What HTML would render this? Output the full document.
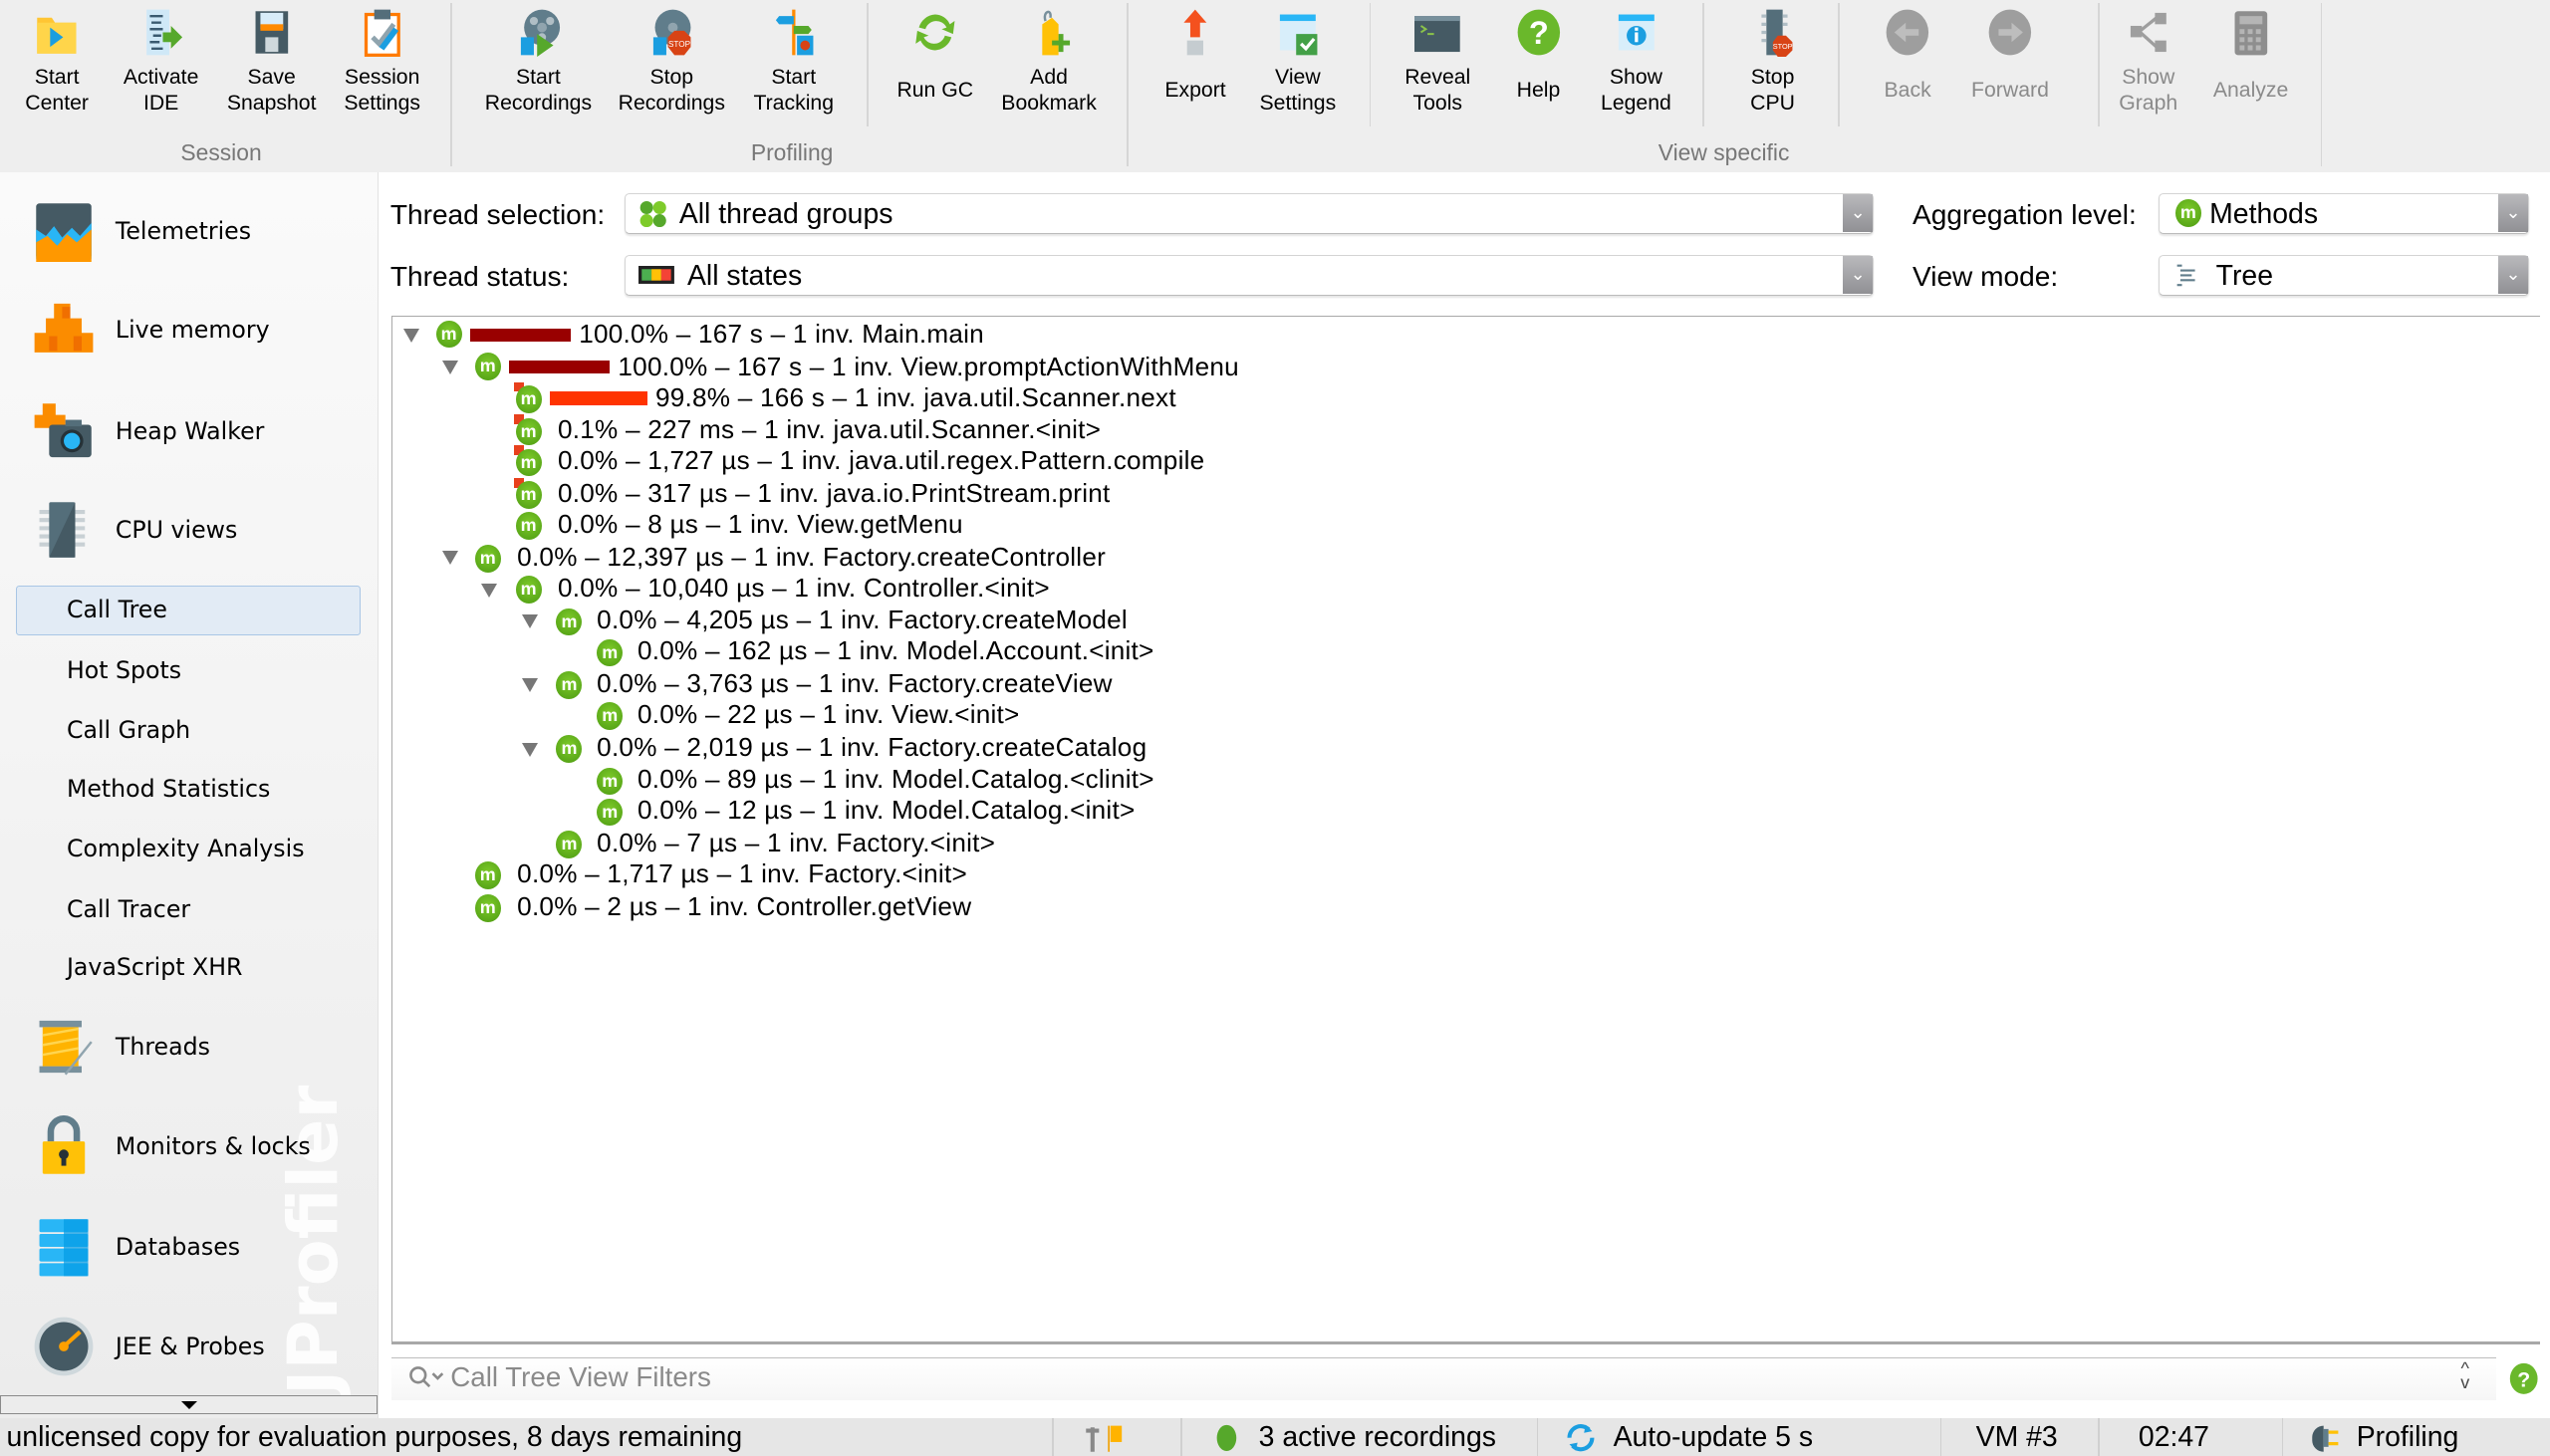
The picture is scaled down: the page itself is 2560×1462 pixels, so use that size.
<!DOCTYPE html>
<html><head><meta charset="utf-8"><style>
*{margin:0;padding:0;box-sizing:border-box}
html,body{width:2560px;height:1462px;overflow:hidden;background:#fff}
#w{zoom:1.63265;width:1568px;height:896px;position:relative;font-family:"Liberation Sans",sans-serif;color:#000}
.a{position:absolute}
#tb{left:0;top:0;width:1568px;height:106px;background:#eeeeee}
.btn{position:absolute;top:0;width:80px;margin-left:-40px;text-align:center;font-size:13px;line-height:16px}
.btn .ic{position:absolute;left:26px;top:5px;width:28px;height:30px}
.btn .t{position:absolute;left:0;width:80px}
.dis{color:#8a8a8a}
.sep{position:absolute;top:2px;width:1px;height:100px;background:#d6d6d6}
.sep.s{height:76px}
.gl{position:absolute;top:86px;font-size:14px;color:#777;transform:translateX(-50%)}
#sb{left:0;top:106px;width:233px;height:766px;background:linear-gradient(#fafafa,#ececec);border-right:1px solid #e2e2e2;overflow:hidden}
.si{position:absolute;left:71px;font-family:"DejaVu Sans",sans-serif;font-size:14.5px;transform:translateY(-50%)}
.ss{position:absolute;left:41px;font-family:"DejaVu Sans",sans-serif;font-size:14.5px;transform:translateY(-50%)}
.big{position:absolute;left:20px;width:38px;height:38px;transform:translateY(-50%)}
.lbl{position:absolute;font-size:17.2px;transform:translateY(-50%)}
.cb{position:absolute;height:25px;background:#fff;border:1px solid #d4d4d4;border-bottom-color:#bbb;border-radius:3px;box-shadow:0 1px 1px rgba(0,0,0,.1);font-size:17.4px}
.cb .ar{position:absolute;right:0;top:0;width:18px;height:23px;background:linear-gradient(#b9b9bc,#909094);color:#fff;font-size:11px;text-align:center;line-height:23px}
#tree{left:241px;top:194px;width:1321px;height:633px;border:1px solid #a8a8a8;border-right:none;border-bottom:2px solid #a8a8a8}
.r{position:absolute;height:19px;font-size:16px;letter-spacing:.15px;line-height:19px;white-space:nowrap;margin-top:1px}
.tg{position:absolute;width:0;height:0;border-left:5px solid transparent;border-right:5px solid transparent;border-top:9px solid #777;margin-top:1px}
.m{position:absolute;width:16px;height:17px;border-radius:50%;background:radial-gradient(circle at 50% 40%,#7ecb2a,#4c9a12);color:#fff;font-size:11px;font-weight:bold;line-height:16px;text-align:center;margin-top:1px}
.rc{position:absolute;width:6px;height:6px;background:#e8401c;margin-top:1px}
.bar{position:absolute;height:8px;margin-top:1px}
#st{left:0;top:872px;width:1568px;height:24px;background:#e6e6e6;font-size:17.4px;line-height:24px}
.sd{position:absolute;top:0;width:1px;height:24px;background:#d0d0d0}
</style></head><body><div id="w">

<div id="tb" class="a">
 <div class="btn" style="left:35px"><svg class="ic" viewBox="0 0 28 30"><path d="M2 6h9l2 3h13v19H2z" fill="#ffc533"/><path d="M2 9h24v19H2z" fill="#ffd54a"/><path d="M10 12l8 6-8 6z" fill="#1b9ee0"/></svg><div class="t" style="top:40px">Start<br>Center</div></div>
 <div class="btn" style="left:99px"><svg class="ic" viewBox="0 0 28 30"><rect x="5" y="1" width="14" height="28" fill="#cfe8f7"/><path d="M7 5h8M8 9h6M7 13h8M9 17h5M7 21h6M8 25h7" stroke="#3a5a70" stroke-width="1.5"/><path d="M15 15h5v-4l7 7-7 7v-4h-5z" fill="#56a82b"/></svg><div class="t" style="top:40px">Activate<br>IDE</div></div>
 <div class="btn" style="left:167px"><svg class="ic" viewBox="0 0 28 30"><rect x="4" y="2" width="20" height="26" fill="#455a64"/><rect x="7" y="3" width="14" height="10" fill="#d8ecf8"/><rect x="7" y="10" width="14" height="4" fill="#ff8a00"/><rect x="10" y="18" width="8" height="9" fill="#cfd8dc"/></svg><div class="t" style="top:40px">Save<br>Snapshot</div></div>
 <div class="btn" style="left:235px"><svg class="ic" viewBox="0 0 28 30"><rect x="4" y="4" width="20" height="25" fill="#fff" stroke="#ff7a00" stroke-width="2"/><rect x="9" y="1" width="10" height="6" fill="#546e7a"/><path d="M8 18l4 4 9-12" stroke="#90a4ae" stroke-width="3" fill="none"/><path d="M12 24l9-12 3 2-9 12z" fill="#1b9ee0"/></svg><div class="t" style="top:40px">Session<br>Settings</div></div>
 <div class="sep" style="left:277px"></div>
 <div class="gl" style="left:136px">Session</div>
 <div class="btn" style="left:331px"><svg class="ic" viewBox="0 0 28 30"><circle cx="16" cy="12" r="11" fill="#607d8b"/><circle cx="16" cy="12" r="3" fill="#90a4ae"/><circle cx="11" cy="8" r="2.5" fill="#b0bec5"/><circle cx="21" cy="8" r="2.5" fill="#b0bec5"/><circle cx="16" cy="18" r="2.5" fill="#b0bec5"/><rect x="3" y="18" width="8" height="11" fill="#1b9ee0"/><path d="M13 16l10 7-10 7z" fill="#56a82b"/></svg><div class="t" style="top:40px">Start<br>Recordings</div></div>
 <div class="btn" style="left:413px"><svg class="ic" viewBox="0 0 28 30"><circle cx="15" cy="12" r="11" fill="#607d8b"/><circle cx="15" cy="12" r="3" fill="#90a4ae"/><rect x="3" y="18" width="8" height="11" fill="#1b9ee0"/><polygon points="16,14 22,14 26,18 26,24 22,29 16,29 12,24 12,18" fill="#d84315"/><text x="19" y="24" font-size="5" fill="#fff" text-anchor="middle" font-family="Liberation Sans">STOP</text></svg><div class="t" style="top:40px">Stop<br>Recordings</div></div>
 <div class="btn" style="left:488px"><svg class="ic" viewBox="0 0 28 30"><rect x="13" y="1" width="2" height="28" fill="#ff8a00"/><path d="M5 5h9v5H5l-2-2.5z" fill="#1b9ee0"/><path d="M14 11h9l2 2.5-2 2.5h-9z" fill="#56a82b"/><rect x="16" y="17" width="10" height="12" fill="#1b9ee0"/><circle cx="21" cy="23" r="3" fill="#d84315"/></svg><div class="t" style="top:40px">Start<br>Tracking</div></div>
 <div class="sep s" style="left:533px"></div>
 <div class="btn" style="left:575px"><svg class="ic" viewBox="0 0 28 30"><path d="M14 4a10 10 0 0 1 9 6l3-2-1 8-7-3 3-1a7 7 0 0 0-13 1l-4-1a11 11 0 0 1 10-8zM14 26a10 10 0 0 1-9-6l-3 2 1-8 7 3-3 1a7 7 0 0 0 13-1l4 1a11 11 0 0 1-10 8z" fill="#6ab82b"/></svg><div class="t" style="top:48px">Run GC</div></div>
 <div class="btn" style="left:645px"><svg class="ic" viewBox="0 0 28 30"><path d="M10 10l6-4 4 4v19h-10z" fill="#ffc107"/><path d="M12 8c-2-6 4-8 3-2" stroke="#78909c" fill="none" stroke-width="1.5"/><path d="M20 16h3v4h4v3h-4v4h-3v-4h-4v-3h4z" fill="#56a82b"/></svg><div class="t" style="top:40px">Add<br>Bookmark</div></div>
 <div class="sep" style="left:693px"></div>
 <div class="gl" style="left:487px">Profiling</div>
 <div class="btn" style="left:735px"><svg class="ic" viewBox="0 0 28 30"><rect x="9" y="20" width="10" height="9" fill="#c5ccd0"/><path d="M14 1l7 8h-4v9h-6v-9h-4z" fill="#f4511e"/></svg><div class="t" style="top:48px">Export</div></div>
 <div class="btn" style="left:798px"><svg class="ic" viewBox="0 0 28 30"><rect x="3" y="4" width="22" height="22" fill="#d8eefa"/><rect x="3" y="4" width="22" height="4" fill="#29b6f6"/><rect x="13" y="16" width="13" height="13" fill="#43a047"/><path d="M16 22l3 3 5-6" stroke="#fff" stroke-width="2" fill="none"/></svg><div class="t" style="top:40px">View<br>Settings</div></div>
 <div class="sep s" style="left:842px"></div>
 <div class="btn" style="left:884px"><svg class="ic" viewBox="0 0 28 30"><rect x="0" y="5" width="28" height="22" fill="#455a64"/><rect x="0" y="5" width="28" height="3" fill="#78909c"/><path d="M4 11l3 2-3 2M8 16h4" stroke="#8bc34a" stroke-width="1.2" fill="none"/></svg><div class="t" style="top:40px">Reveal<br>Tools</div></div>
 <div class="btn" style="left:946px"><svg class="ic" viewBox="0 0 28 30"><ellipse cx="14" cy="15" rx="13" ry="14" fill="#6ab82b"/><text x="14" y="22" font-size="20" font-weight="bold" fill="#fff" text-anchor="middle" font-family="Liberation Sans">?</text></svg><div class="t" style="top:48px">Help</div></div>
 <div class="btn" style="left:1006px"><svg class="ic" viewBox="0 0 28 30"><rect x="3" y="4" width="22" height="22" fill="#d8eefa"/><rect x="3" y="4" width="22" height="4" fill="#29b6f6"/><circle cx="14" cy="17" r="6" fill="#1b9ee0"/><rect x="13" y="15" width="2" height="6" fill="#fff"/><rect x="13" y="12" width="2" height="2" fill="#fff"/></svg><div class="t" style="top:40px">Show<br>Legend</div></div>
 <div class="sep s" style="left:1047px"></div>
 <div class="btn" style="left:1090px"><svg class="ic" viewBox="0 0 28 30"><rect x="10" y="1" width="10" height="28" fill="#546e7a"/><path d="M7 5h3M7 10h3M7 15h3M7 20h3M20 5h3M20 10h3" stroke="#b0bec5" stroke-width="2"/><polygon points="17,17 22,17 26,21 26,26 22,30 17,30 14,26 14,21" fill="#d84315"/><text x="20" y="25" font-size="4.5" fill="#fff" text-anchor="middle" font-family="Liberation Sans">STOP</text></svg><div class="t" style="top:40px">Stop<br>CPU</div></div>
 <div class="sep s" style="left:1130px"></div>
 <div class="btn dis" style="left:1173px"><svg class="ic" viewBox="0 0 28 30"><ellipse cx="14" cy="15" rx="13" ry="14" fill="#9e9e9e"/><path d="M6 15l7-6v4h8v4h-8v4z" fill="#bdbdbd"/></svg><div class="t" style="top:48px">Back</div></div>
 <div class="btn dis" style="left:1236px"><svg class="ic" viewBox="0 0 28 30"><ellipse cx="14" cy="15" rx="13" ry="14" fill="#9e9e9e"/><path d="M22 15l-7-6v4H7v4h8v4z" fill="#bdbdbd"/></svg><div class="t" style="top:48px">Forward</div></div>
 <div class="sep s" style="left:1290px"></div>
 <div class="btn dis" style="left:1321px"><svg class="ic" viewBox="0 0 28 30"><rect x="3" y="11" width="7" height="7" fill="#9e9e9e"/><rect x="18" y="3" width="7" height="7" fill="#9e9e9e"/><rect x="18" y="20" width="7" height="7" fill="#9e9e9e"/><path d="M9 14L19 6M9 15l10 9" stroke="#9e9e9e" stroke-width="2"/></svg><div class="t" style="top:40px">Show<br>Graph</div></div>
 <div class="btn dis" style="left:1384px"><svg class="ic" viewBox="0 0 28 30"><rect x="4" y="2" width="20" height="27" rx="2" fill="#8e8e8e"/><rect x="7" y="5" width="14" height="5" fill="#b5b5b5"/><path d="M7 13h3v3H7zM12 13h3v3h-3zM17 13h3v3h-3zM7 18h3v3H7zM12 18h3v3h-3zM17 18h3v3h-3zM7 23h3v3H7zM12 23h3v3h-3zM17 23h3v3h-3z" fill="#b5b5b5"/></svg><div class="t" style="top:48px">Analyze</div></div>
 <div class="sep" style="left:1427px"></div>
 <div class="gl" style="left:1060px">View specific</div>
</div>

<div id="sb" class="a">
 <div class="a" style="left:170px;top:752px;font-family:'DejaVu Sans',sans-serif;font-weight:bold;font-size:42px;line-height:46px;color:#fff;opacity:.9;transform:rotate(-90deg);transform-origin:0 0;white-space:nowrap">JProfiler</div>
</div>
<svg class="big" style="top:142px" viewBox="0 0 38 38"><rect x="2" y="2" width="34" height="34" rx="2" fill="#455a64"/><path d="M2 18l6 4 5-6 5 7 6-6 5 5 7-8v22H2z" fill="#29b6f6"/><path d="M2 26l7-4 6 6 6-7 6 5 9-8v20H2z" fill="#ff9800"/></svg>
<svg class="big" style="top:203px" viewBox="0 0 38 38"><path d="M13 3h10v9h7v9h7v12H1V21h7v-9h5z" fill="#fb8c00"/><path d="M18 5h5v7h-5zM10 23h5v9h-5zM25 23h5v9h-5z" fill="#e65100" opacity=".5"/></svg>
<svg class="big" style="top:265px" viewBox="0 0 38 38"><path d="M6 2h8v7h6v8H1V9h5z" fill="#fb8c00"/><rect x="10" y="15" width="26" height="20" rx="2" fill="#455a64"/><rect x="20" y="12" width="10" height="4" fill="#546e7a"/><circle cx="24" cy="25" r="7" fill="#263238"/><circle cx="24" cy="25" r="5" fill="#29b6f6"/></svg>
<svg class="big" style="top:326px" viewBox="0 0 38 38"><path d="M4 8h28M4 13h28M4 18h28M4 23h28M4 28h28" stroke="#c8d0d4" stroke-width="2.5"/><rect x="10" y="2" width="16" height="34" rx="1" fill="#546e7a"/><path d="M26 2L10 36h16z" fill="#455a64"/></svg>
<div class="si" style="top:142px">Telemetries</div>
<div class="si" style="top:203px">Live memory</div>
<div class="si" style="top:265px">Heap Walker</div>
<div class="si" style="top:326px">CPU views</div>
<div class="a" style="left:10px;top:360px;width:212px;height:31px;background:#e2ebf5;border:1px solid #a9c6e5;border-radius:2px"></div>
<div class="ss" style="top:375px">Call Tree</div>
<div class="ss" style="top:412px">Hot Spots</div>
<div class="ss" style="top:449px">Call Graph</div>
<div class="ss" style="top:485px">Method Statistics</div>
<div class="ss" style="top:522px">Complexity Analysis</div>
<div class="ss" style="top:559px">Call Tracer</div>
<div class="ss" style="top:595px">JavaScript XHR</div>
<svg class="big" style="top:644px" viewBox="0 0 38 38"><rect x="4" y="3" width="26" height="4" fill="#78909c"/><rect x="4" y="31" width="26" height="4" fill="#78909c"/><rect x="6" y="7" width="22" height="24" fill="#ffb300"/><path d="M6 12l22-4M6 18l22-4M6 24l22-4" stroke="#ffd54f" stroke-width="1.5"/><path d="M20 36L36 16" stroke="#90a4ae" stroke-width="1.5"/></svg>
<svg class="big" style="top:705px" viewBox="0 0 38 38"><path d="M11 16V10a8 8 0 0 1 16 0v6" stroke="#607d8b" stroke-width="4" fill="none"/><rect x="6" y="16" width="26" height="20" rx="1" fill="#ffc107"/><circle cx="19" cy="24" r="3" fill="#263238"/><rect x="17.5" y="24" width="3" height="7" fill="#263238"/></svg>
<svg class="big" style="top:767px" viewBox="0 0 38 38"><rect x="4" y="2" width="30" height="8" rx="1" fill="#29b6f6"/><rect x="4" y="11" width="30" height="8" rx="1" fill="#29b6f6"/><rect x="4" y="20" width="30" height="8" rx="1" fill="#29b6f6"/><rect x="4" y="29" width="30" height="8" rx="1" fill="#29b6f6"/><rect x="19" y="2" width="15" height="35" fill="#039be5" opacity=".7"/></svg>
<svg class="big" style="top:828px" viewBox="0 0 38 38"><circle cx="19" cy="19" r="18" fill="#cfd8dc"/><circle cx="19" cy="19" r="15" fill="#455a64"/><path d="M19 19L29 10" stroke="#ffa000" stroke-width="2.5"/><circle cx="19" cy="19" r="3" fill="#ffa000"/></svg>
<div class="si" style="top:644px">Threads</div>
<div class="si" style="top:705px">Monitors &amp; locks</div>
<div class="si" style="top:767px">Databases</div>
<div class="si" style="top:828px">JEE &amp; Probes</div>
<div class="a" style="left:0;top:858px;width:232px;height:12px;border:1px solid #8a8a8a;background:#ececec"><div class="a" style="left:111px;top:3px;border-left:5px solid transparent;border-right:5px solid transparent;border-top:5px solid #000"></div></div>

<div class="lbl" style="left:240px;top:132px">Thread selection:</div>
<div class="lbl" style="left:240px;top:170px">Thread status:</div>
<div class="lbl" style="left:1176px;top:132px">Aggregation level:</div>
<div class="lbl" style="left:1176px;top:170px">View mode:</div>
<div class="cb" style="left:384px;top:119px;width:768px"><svg class="a" style="left:8px;top:4px" width="18" height="16"><circle cx="5" cy="4" r="4" fill="#56a82b"/><circle cx="13" cy="4" r="4" fill="#7ecb2a"/><circle cx="5" cy="12" r="4" fill="#7ecb2a"/><circle cx="13" cy="12" r="4" fill="#56a82b"/></svg><span class="a" style="left:33px;top:2px">All thread groups</span><div class="ar">&#8964;</div></div>
<div class="cb" style="left:384px;top:157px;width:768px"><svg class="a" style="left:8px;top:6px" width="22" height="11"><rect width="22" height="11" fill="#222"/><rect x="2" y="2" width="6" height="7" fill="#4caf50"/><rect x="8" y="2" width="6" height="7" fill="#ffc107"/><rect x="14" y="2" width="6" height="7" fill="#f44336"/></svg><span class="a" style="left:38px;top:2px">All states</span><div class="ar">&#8964;</div></div>
<div class="cb" style="left:1327px;top:119px;width:228px"><div class="m" style="left:10px;top:3px;margin:0">m</div><span class="a" style="left:31px;top:2px">Methods</span><div class="ar">&#8964;</div></div>
<div class="cb" style="left:1327px;top:157px;width:228px"><svg class="a" style="left:10px;top:5px" width="14" height="14"><path d="M1 1h3M3 4h9M3 7h7M3 10h9M1 13h3" stroke="#607d8b" stroke-width="1.3"/></svg><span class="a" style="left:35px;top:2px">Tree</span><div class="ar">&#8964;</div></div>

<div id="tree" class="a"></div>
<div class="tg" style="left:248px;top:201px"></div><div class="m" style="left:268px;top:196px">m</div><div class="bar" style="left:289px;top:201px;width:62px;background:#990000"></div><div class="r" style="left:356px;top:195px">100.0% – 167 s – 1 inv. Main.main</div>
<div class="tg" style="left:272px;top:221px"></div><div class="m" style="left:292px;top:216px">m</div><div class="bar" style="left:313px;top:221px;width:62px;background:#990000"></div><div class="r" style="left:380px;top:215px">100.0% – 167 s – 1 inv. View.promptActionWithMenu</div>
<div class="rc" style="left:316px;top:234px"></div><div class="m" style="left:317px;top:236px">m</div><div class="bar" style="left:338px;top:240px;width:60px;background:#ff3300"></div><div class="r" style="left:403px;top:234px">99.8% – 166 s – 1 inv. java.util.Scanner.next</div>
<div class="rc" style="left:316px;top:254px"></div><div class="m" style="left:317px;top:256px">m</div><div class="r" style="left:343px;top:254px">0.1% – 227 ms – 1 inv. java.util.Scanner.&lt;init&gt;</div>
<div class="rc" style="left:316px;top:273px"></div><div class="m" style="left:317px;top:275px">m</div><div class="r" style="left:343px;top:273px">0.0% – 1,727 µs – 1 inv. java.util.regex.Pattern.compile</div>
<div class="rc" style="left:316px;top:293px"></div><div class="m" style="left:317px;top:295px">m</div><div class="r" style="left:343px;top:293px">0.0% – 317 µs – 1 inv. java.io.PrintStream.print</div>
<div class="m" style="left:317px;top:314px">m</div><div class="r" style="left:343px;top:312px">0.0% – 8 µs – 1 inv. View.getMenu</div>
<div class="tg" style="left:272px;top:338px"></div><div class="m" style="left:292px;top:334px">m</div><div class="r" style="left:318px;top:332px">0.0% – 12,397 µs – 1 inv. Factory.createController</div>
<div class="tg" style="left:296px;top:358px"></div><div class="m" style="left:317px;top:353px">m</div><div class="r" style="left:343px;top:351px">0.0% – 10,040 µs – 1 inv. Controller.&lt;init&gt;</div>
<div class="tg" style="left:321px;top:377px"></div><div class="m" style="left:342px;top:373px">m</div><div class="r" style="left:367px;top:371px">0.0% – 4,205 µs – 1 inv. Factory.createModel</div>
<div class="m" style="left:367px;top:392px">m</div><div class="r" style="left:392px;top:390px">0.0% – 162 µs – 1 inv. Model.Account.&lt;init&gt;</div>
<div class="tg" style="left:321px;top:416px"></div><div class="m" style="left:342px;top:412px">m</div><div class="r" style="left:367px;top:410px">0.0% – 3,763 µs – 1 inv. Factory.createView</div>
<div class="m" style="left:367px;top:431px">m</div><div class="r" style="left:392px;top:429px">0.0% – 22 µs – 1 inv. View.&lt;init&gt;</div>
<div class="tg" style="left:321px;top:456px"></div><div class="m" style="left:342px;top:451px">m</div><div class="r" style="left:367px;top:449px">0.0% – 2,019 µs – 1 inv. Factory.createCatalog</div>
<div class="m" style="left:367px;top:471px">m</div><div class="r" style="left:392px;top:469px">0.0% – 89 µs – 1 inv. Model.Catalog.&lt;clinit&gt;</div>
<div class="m" style="left:367px;top:490px">m</div><div class="r" style="left:392px;top:488px">0.0% – 12 µs – 1 inv. Model.Catalog.&lt;init&gt;</div>
<div class="m" style="left:342px;top:510px">m</div><div class="r" style="left:367px;top:508px">0.0% – 7 µs – 1 inv. Factory.&lt;init&gt;</div>
<div class="m" style="left:292px;top:529px">m</div><div class="r" style="left:318px;top:527px">0.0% – 1,717 µs – 1 inv. Factory.&lt;init&gt;</div>
<div class="m" style="left:292px;top:549px">m</div><div class="r" style="left:318px;top:547px">0.0% – 2 µs – 1 inv. Controller.getView</div>

<div class="a" style="left:241px;top:835px;width:1294px;height:26px;border-top:1px solid #bdbdbd;background:linear-gradient(#fff,#f6f6f6)"></div>
<svg class="a" style="left:251px;top:840px" width="22" height="14"><circle cx="6" cy="6" r="4.5" stroke="#8a8a8a" stroke-width="1.6" fill="none"/><path d="M9 9l4 4M15 5l3 3 3-3" stroke="#8a8a8a" stroke-width="1.6" fill="none"/></svg>
<div class="a" style="left:277px;top:837px;font-size:17px;color:#8a8a8a">Call Tree View Filters</div>
<div class="a" style="left:1513px;top:837px;font-size:11px;line-height:9px;color:#444;text-align:center">^<br>v</div>
<svg class="a" style="left:1543px;top:838px" width="18" height="20"><ellipse cx="9" cy="10" rx="8.5" ry="9.5" fill="#6ab82b"/><text x="9" y="15" font-size="13" font-weight="bold" fill="#fff" text-anchor="middle" font-family="Liberation Sans">?</text></svg>

<div id="st" class="a">
 <div class="a" style="left:4px;top:0">unlicensed copy for evaluation purposes, 8 days remaining</div>
 <div class="sd" style="left:647px"></div>
 <svg class="a" style="left:666px;top:4px" width="28" height="17"><path d="M2 4h8M6 2v15" stroke="#888" stroke-width="2.5"/><path d="M16 1v16" stroke="#f0a000" stroke-width="1"/><path d="M17 1h7v10h-7z" fill="#ffb300"/></svg>
 <div class="sd" style="left:726px"></div>
 <svg class="a" style="left:747px;top:4px" width="14" height="17"><ellipse cx="7" cy="8.5" rx="6" ry="8" fill="#56a82b"/></svg>
 <div class="a" style="left:774px;top:0">3 active recordings</div>
 <div class="sd" style="left:945px"></div>
 <svg class="a" style="left:961px;top:3px" width="22" height="18"><path d="M4 9a7 7 0 0 1 12-5M18 9a7 7 0 0 1-12 5" stroke="#1b9ee0" stroke-width="2.5" fill="none"/><path d="M14 1l4 4-5 1zM8 17l-4-4 5-1z" fill="#1b9ee0"/></svg>
 <div class="a" style="left:992px;top:0">Auto-update 5 s</div>
 <div class="sd" style="left:1193px"></div>
 <div class="a" style="left:1215px;top:0">VM #3</div>
 <div class="sd" style="left:1290px"></div>
 <div class="a" style="left:1315px;top:0">02:47</div>
 <div class="sd" style="left:1403px"></div>
 <svg class="a" style="left:1420px;top:4px" width="20" height="17"><path d="M2 8a7 7 0 0 1 7-7v16a7 7 0 0 1-7-7z" fill="#455a64"/><rect x="9" y="3" width="3" height="11" fill="#607d8b"/><path d="M12 5h6M12 12h6" stroke="#ffc107" stroke-width="2"/></svg>
 <div class="a" style="left:1449px;top:0">Profiling</div>
</div>

</div></body></html>
